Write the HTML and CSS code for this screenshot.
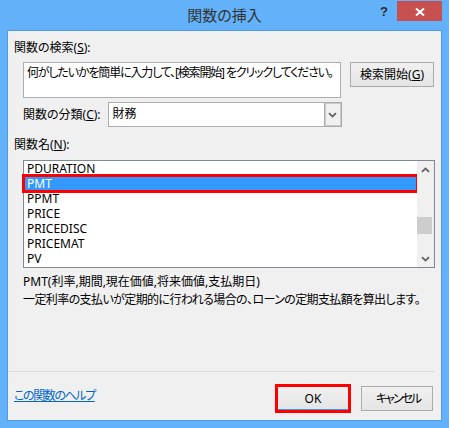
FILE: index.html
```html
<!DOCTYPE html>
<html lang="ja">
<head>
    <meta charset="UTF-8">
    <meta name="viewport" content="width=device-width, initial-scale=1.0">
    <title>関数の挿入</title>

    <link rel="stylesheet" href="styles.css">
</head>
<body>
    <div class="window">
        <div class="titlebar">
            <span></span>
            <h1 class="title">関数の挿入</h1>
            <div class="caption-btns">
                <span class="help-btn">?</span>
                <span class="close-btn">
                    <svg width="10" height="8" viewBox="0 0 10 8">
                        <path d="M1 0.5 L9 7.5 M9 0.5 L1 7.5" stroke="#fff" stroke-width="2" fill="none"/>
                    </svg>
                </span>
            </div>
        </div>

        <form class="client">
            <p class="label">関数の検索(<u>S</u>):</p>
            <div class="search-row">
                <div class="search-box">何がしたいかを簡単に入力して、[検索開始] をクリックしてください。</div>
                <button class="btn search-btn" type="button">検索開始(<u>G</u>)</button>
            </div>

            <div class="category-row">
                <span class="label">関数の分類(<u>C</u>):</span>
                <div class="combo">
                    <span class="combo-text">財務</span>
                    <span class="combo-arrow">
                        <svg width="9" height="6" viewBox="0 0 9 6">
                            <polyline points="1,1.2 4.5,4.6 8,1.2" stroke="#606060" stroke-width="1.8" fill="none"/>
                        </svg>
                    </span>
                </div>
            </div>

            <p class="label name-label">関数名(<u>N</u>):</p>
            <div class="listbox">
                <ul class="items">
                    <li>PDURATION</li>
                    <li class="selected">PMT</li>
                    <li>PPMT</li>
                    <li>PRICE</li>
                    <li>PRICEDISC</li>
                    <li>PRICEMAT</li>
                    <li>PV</li>
                </ul>
                <div class="scrollbar">
                    <span class="arrow">
                        <svg width="9" height="6" viewBox="0 0 9 6">
                            <polyline points="1,4.8 4.5,1.4 8,4.8" stroke="#606060" stroke-width="1.8" fill="none"/>
                        </svg>
                    </span>
                    <div class="track"><div class="thumb"></div></div>
                    <span class="arrow">
                        <svg width="9" height="6" viewBox="0 0 9 6">
                            <polyline points="1,1.2 4.5,4.6 8,1.2" stroke="#606060" stroke-width="1.8" fill="none"/>
                        </svg>
                    </span>
                </div>
            </div>

            <div class="desc">
                <p>PMT(利率,期間,現在価値,将来価値,支払期日)</p>
                <p class="summary">一定利率の支払いが定期的に行われる場合の、ローンの定期支払額を算出します。</p>
            </div>

            <div class="footer">
                <a href="#" class="help-link">この関数のヘルプ</a>
                <div class="actions">
                    <button class="btn ok-btn" type="button">OK</button>
                    <button class="btn cancel-btn" type="button">キャンセル</button>
                </div>
            </div>
        </form>
    </div>
</body>
</html>
```

FILE: styles.css
```css
*{
    margin: 0;
    padding: 0;
    box-sizing: border-box;
}

body{
    background-color: #63b2f9;
    font-family: "Noto Sans", "Noto Sans CJK JP", sans-serif;
    font-size: 12px;
    color: #000;
    font-feature-settings: "palt";
}

.window{
    width: 449px;
    height: 428px;
    background-color: #63b2f9;
    padding: 0 7px 7px;
    display: flex;
    flex-direction: column;
}

/* title bar */
.titlebar{
    height: 30px;
    display: grid;
    grid-template-columns: 1fr auto 1fr;
    flex-shrink: 0;
}

.title{
    font-size: 15px;
    font-weight: 400;
    line-height: 31px;
    color: #333;
}

.caption-btns{
    display: flex;
    justify-content: flex-end;
    align-items: flex-start;
}

.help-btn{
    width: 26px;
    height: 20px;
    margin-top: 1px;
    font-family: "Liberation Sans", sans-serif;
    font-size: 13px;
    font-weight: 700;
    line-height: 22px;
    text-align: center;
    color: #2b2b2b;
}

.close-btn{
    width: 45px;
    height: 20px;
    margin-top: 1px;
    background-color: #c75050;
    display: flex;
    justify-content: center;
    align-items: center;
    padding-top: 1px;
}

/* dialog body */
.client{
    flex-grow: 1;
    background-color: #f0f0f0;
    border: 1px solid #509ce4;
    padding: 9px 6px 0;
    display: flex;
    flex-direction: column;
}

.label{
    line-height: 16px;
}

.search-row{
    display: flex;
    align-items: flex-start;
    gap: 9px;
    margin: 6px 0 0 9px;
}

.search-box{
    width: 318px;
    height: 36px;
    background-color: #fff;
    border: 1px solid #abadb3;
    padding: 2px 3px;
    line-height: 16px;
    letter-spacing: -1.15px;
    white-space: nowrap;
    overflow: hidden;
}

.btn{
    font-family: "Noto Sans", "Noto Sans CJK JP", sans-serif;
    font-size: 12px;
    font-feature-settings: "palt";
    color: #000;
    height: 25px;
    width: 72px;
    padding: 0;
    border: 1px solid #acacac;
    background: linear-gradient(#f0f0f0, #e5e5e5);
    line-height: 16px;
}

.search-btn{
    width: 84px;
}

.cancel-btn{
    letter-spacing: -2px;
    text-indent: 2px;
}

.category-row{
    display: flex;
    align-items: center;
    gap: 7px;
    margin: 4px 0 0 9px;
}

.combo{
    width: 234px;
    height: 25px;
    background-color: #fff;
    border: 1px solid #acacac;
    display: flex;
    justify-content: space-between;
}

.combo-text{
    padding: 3px 4px;
    line-height: 16px;
}

.combo-arrow{
    width: 18px;
    margin: -1px -1px -1px 0;
    border: 1px solid #acacac;
    box-shadow: inset 0 0 0 1px #c9c9c9;
    background-color: #f0f0f0;
    display: flex;
    justify-content: center;
    align-items: center;
}

.name-label{
    margin-top: 10px;
}

/* function list */
.listbox{
    display: flex;
    height: 108px;
    margin: 7px 0 0 9px;
    background-color: #fff;
    border: 1px solid #828790;
}

.items{
    list-style: none;
    width: 393px;
}

.items li{
    height: 15px;
    line-height: 15px;
    padding-left: 3px;
}

.items .selected{
    background-color: #3399ff;
    color: #fff;
    outline: 3px solid #ff0000;
    outline-offset: -1px;
}

.scrollbar{
    width: 17px;
    background-color: #f0f0f0;
    display: flex;
    flex-direction: column;
}

.arrow{
    height: 17px;
    display: flex;
    justify-content: center;
    align-items: center;
}

.track{
    flex-grow: 1;
}

.thumb{
    width: 15px;
    height: 17px;
    margin-top: 39px;
    background-color: #cdcdcd;
}

.desc{
    margin: 5px 0 0 9px;
    line-height: 18px;
}

.summary{
    letter-spacing: -0.6px;
}

/* bottom buttons */
.footer{
    margin: auto 0 0 -6px;
    padding: 14px 2px 9px 6px;
    border-top: 1px solid #dcdcdc;
    display: flex;
    justify-content: space-between;
    align-items: flex-start;
}

.help-link{
    margin-top: 2px;
    line-height: 16px;
    letter-spacing: -1.4px;
    color: #0066cc;
}

.actions{
    display: flex;
    gap: 12px;
}

.ok-btn{
    border-color: #3399ff;
    box-shadow: inset 0 -1px #3399ff;
    outline: 3px solid #ff0000;
    outline-offset: -1px;
}
```
